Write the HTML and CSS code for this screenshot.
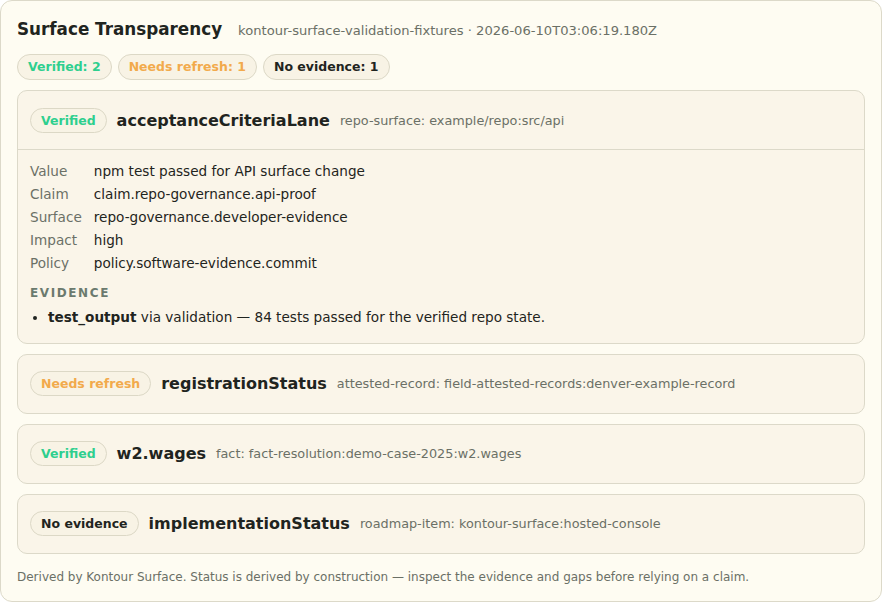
FILE: index.html
```html
<!DOCTYPE html>
<html lang="en">
<head>
  <meta charset="UTF-8">
  <title>Surface Transparency</title>
  <link rel="stylesheet" href="styles.css">
</head>
<body>
  <div class="panel">
    <div class="panel-head">
      <h1>Surface Transparency</h1>
      <span class="source">kontour-surface-validation-fixtures · 2026-06-10T03:06:19.180Z</span>
    </div>

    <div class="counts">
      <span class="chip verified">Verified: 2</span>
      <span class="chip stale">Needs refresh: 1</span>
      <span class="chip missing">No evidence: 1</span>
    </div>

    <div class="claim open">
      <div class="claim-head">
        <span class="chip verified">Verified</span>
        <span class="claim-name">acceptanceCriteriaLane</span>
        <span class="claim-ref">repo-surface: example/repo:src/api</span>
      </div>
      <div class="claim-body">
        <div class="facts">
          <span class="label">Value</span><span>npm test passed for API surface change</span>
          <span class="label">Claim</span><span>claim.repo-governance.api-proof</span>
          <span class="label">Surface</span><span>repo-governance.developer-evidence</span>
          <span class="label">Impact</span><span>high</span>
          <span class="label">Policy</span><span>policy.software-evidence.commit</span>
        </div>
        <h3>Evidence</h3>
        <ul class="evidence">
          <li><b>test_output</b> via validation — 84 tests passed for the verified repo state.</li>
        </ul>
      </div>
    </div>

    <div class="claim">
      <div class="claim-head">
        <span class="chip stale">Needs refresh</span>
        <span class="claim-name">registrationStatus</span>
        <span class="claim-ref">attested-record: field-attested-records:denver-example-record</span>
      </div>
    </div>

    <div class="claim">
      <div class="claim-head">
        <span class="chip verified">Verified</span>
        <span class="claim-name">w2.wages</span>
        <span class="claim-ref">fact: fact-resolution:demo-case-2025:w2.wages</span>
      </div>
    </div>

    <div class="claim">
      <div class="claim-head">
        <span class="chip missing">No evidence</span>
        <span class="claim-name">implementationStatus</span>
        <span class="claim-ref">roadmap-item: kontour-surface:hosted-console</span>
      </div>
    </div>

    <p class="note">Derived by Kontour Surface. Status is derived by construction — inspect the evidence and gaps before relying on a claim.</p>
  </div>
</body>
</html>
```

FILE: styles.css
```css
body {
  margin: 0;
  font-family: 'DejaVu Sans', Verdana, sans-serif;
  color: #1f2420;
  background: #ffffff;
}

.panel {
  box-sizing: border-box;
  height: 602px;
  padding: 16px;
  background: #fefcf2;
  border: 1px solid #dcd9c9;
  border-radius: 12px;
}

.panel-head {
  display: flex;
  align-items: baseline;
  gap: 16px;
  padding-top: 2px;
}

h1 {
  margin: 0;
  font-size: 16.8px;
  font-weight: bold;
}

.source {
  font-size: 13.1px;
  color: #6b7066;
}

.counts {
  display: flex;
  gap: 6px;
  margin: 15px 0 10px;
}

.chip {
  display: inline-block;
  padding: 5px 10px;
  font-size: 12.5px;
  font-weight: bold;
  line-height: 14px;
  background: #f8f3e5;
  border: 1px solid #dcd8c6;
  border-radius: 999px;
}

.claim-head .chip {
  line-height: 13px;
}

.chip.verified { color: #2ecf8e; }
.chip.stale { color: #f2aa4c; }
.chip.missing { color: #1f2420; }

.claim {
  margin-bottom: 10px;
  background: #faf5e9;
  border: 1px solid #dcd9c9;
  border-radius: 10px;
}

.claim-head {
  display: flex;
  align-items: center;
  gap: 10px;
  padding: 16.5px 12px;
}

.claim.open .claim-head {
  padding-bottom: 16px;
  border-bottom: 1px solid #dcd9c9;
}

.claim-name {
  font-size: 16px;
  font-weight: bold;
}

.claim-ref {
  font-size: 12.8px;
  color: #6b7066;
}

.claim-body {
  padding: 13px 12px 18px;
  font-size: 13.6px;
}

.facts {
  display: grid;
  grid-template-columns: max-content 1fr;
  column-gap: 12px;
  row-gap: 6px;
  line-height: 17px;
}

.label {
  color: #6b7066;
}

h3 {
  margin: 14px 0 9px;
  font-size: 12px;
  font-weight: bold;
  letter-spacing: 1.6px;
  text-transform: uppercase;
  color: #6b7a6e;
}

.evidence {
  margin: 0;
  padding-left: 18px;
}

.note {
  margin: 16px 0 0;
  font-size: 12px;
  color: #6b7066;
}
```
